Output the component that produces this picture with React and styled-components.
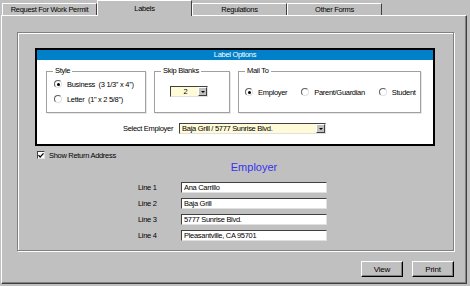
import styled, { createGlobalStyle } from "styled-components";

const GlobalStyle = createGlobalStyle`
  body {
    margin: 0;
    background: #c0c0c0;
    font-family: "Liberation Sans", Arial, sans-serif;
    font-size: 7.5px;
    letter-spacing: -0.3px;
    color: #000;
  }
`;

const tabs = ["Request For Work Permit", "Labels", "Regulations", "Other Forms"];
const lines = ["Ana Carrillo", "Baja Grill", "5777 Sunrise Blvd.", "Pleasantville, CA  95701"];

export default function App() {
  return (
    <Screen>
      <GlobalStyle />
      <TabBar>
        {tabs.map((t) => (
          <Tab key={t} $active={t === "Labels"}>
            {t}
          </Tab>
        ))}
      </TabBar>
      <Panel>
        <Frame>
          <OptionsBox>
            <TitleBar>Label Options</TitleBar>
            <GroupRow>
              <Group $width={100}>
                <Legend>Style</Legend>
                <RadioColumn>
                  <RadioItem>
                    <Radio $checked />
                    Business&nbsp;&nbsp;(3 1/3'' x 4'')
                  </RadioItem>
                  <RadioItem>
                    <Radio />
                    Letter&nbsp;&nbsp;(1'' x 2 5/8'')
                  </RadioItem>
                </RadioColumn>
              </Group>
              <Group $width={76}>
                <Legend>Skip Blanks</Legend>
                <SkipCombo>
                  <ComboValue $center>2</ComboValue>
                  <ComboArrow />
                </SkipCombo>
              </Group>
              <Group $width={183}>
                <Legend>Mail To</Legend>
                <RadioRow>
                  <RadioItem>
                    <Radio $checked />
                    Employer
                  </RadioItem>
                  <RadioItem>
                    <Radio />
                    Parent/Guardian
                  </RadioItem>
                  <RadioItem>
                    <Radio />
                    Student
                  </RadioItem>
                </RadioRow>
              </Group>
            </GroupRow>
            <EmployerRow>
              <span>Select Employer</span>
              <EmployerCombo>
                <ComboValue>Baja Grill / 5777 Sunrise Blvd.</ComboValue>
                <ComboArrow />
              </EmployerCombo>
            </EmployerRow>
          </OptionsBox>
          <CheckRow>
            <CheckBox>
              <svg width="7" height="7" viewBox="0 0 7 7">
                <polyline points="0.5,3 2.5,5.2 6.5,1" fill="none" stroke="#000" strokeWidth="1.5" />
              </svg>
            </CheckBox>
            Show Return Address
          </CheckRow>
          <LinesGrid>
            <Heading>Employer</Heading>
            {lines.map((v, i) => (
              <LineRow key={i}>
                <LineLabel>Line {i + 1}</LineLabel>
                <LineInput>{v}</LineInput>
              </LineRow>
            ))}
          </LinesGrid>
        </Frame>
        <ButtonRow>
          <Button>View</Button>
          <Button>Print</Button>
        </ButtonRow>
      </Panel>
    </Screen>
  );
}

const Screen = styled.div`
  width: 470px;
  height: 286px;
  background: #c0c0c0;
  display: flex;
  flex-direction: column;
  overflow: hidden;
`;

const TabBar = styled.div`
  height: 15px;
  display: flex;
  align-items: flex-end;
  padding-left: 2px;
  position: relative;
  z-index: 1;
`;

const Tab = styled.div`
  width: 95px;
  box-sizing: border-box;
  height: ${(p) => (p.$active ? "16px" : "12px")};
  margin-bottom: ${(p) => (p.$active ? "-1px" : "0")};
  background: #c0c0c0;
  border-top: 1px solid #fff;
  border-left: 1px solid #fff;
  border-right: 1px solid #404040;
  display: flex;
  justify-content: center;
  align-items: ${(p) => (p.$active ? "flex-start" : "center")};
  padding-top: ${(p) => (p.$active ? "3px" : "0")};
  line-height: 10px;
  white-space: nowrap;
`;

const Panel = styled.div`
  margin-left: 1px;
  width: 466px;
  height: 269px;
  box-sizing: border-box;
  border-top: 1px solid #fff;
  border-left: 1px solid #fff;
  border-right: 1px solid #404040;
  border-bottom: 1px solid #404040;
  box-shadow: inset -1px -1px 0 #808080;
  padding: 16px 0 0 15px;
  display: flex;
  flex-direction: column;
`;

const Frame = styled.div`
  width: 437px;
  height: 219px;
  box-sizing: border-box;
  border: 1px solid #808080;
  box-shadow: 1px 1px 0 #fff, inset 1px 1px 0 #fff;
  padding: 15px 0 0 17px;
  display: flex;
  flex-direction: column;
`;

const OptionsBox = styled.div`
  width: 400px;
  height: 98px;
  box-sizing: border-box;
  border: 2px solid #000;
  background: #fff;
  display: flex;
  flex-direction: column;
`;

const TitleBar = styled.div`
  height: 10px;
  line-height: 10px;
  background: #0080c8;
  color: #fff;
  text-align: center;
`;

const GroupRow = styled.div`
  display: flex;
  gap: 8px;
  margin: 6px 0 0 9px;
`;

const Group = styled.fieldset`
  width: ${(p) => p.$width}px;
  height: 47px;
  box-sizing: border-box;
  margin: 0;
  padding: 0;
  border: 1px solid #a0a0a0;
  box-shadow: 1px 1px 0 #e8e8e8;
  min-inline-size: 0;
`;

const Legend = styled.legend`
  margin-left: 6px;
  padding: 0 2px;
  line-height: 10px;
  height: 10px;
`;

const RadioColumn = styled.div`
  display: flex;
  flex-direction: column;
  gap: 5px;
  padding: 3px 0 0 7px;
`;

const RadioRow = styled.div`
  display: flex;
  gap: 14px;
  padding: 11px 0 0 6px;
`;

const RadioItem = styled.div`
  display: flex;
  align-items: center;
  gap: 5px;
  height: 10px;
  white-space: nowrap;
`;

const Radio = styled.span`
  width: 8px;
  height: 8px;
  box-sizing: border-box;
  border-radius: 50%;
  border: 1px solid;
  border-color: #606060 #e0e0e0 #e0e0e0 #606060;
  background: #fff;
  display: flex;
  align-items: center;
  justify-content: center;

  &::after {
    content: "";
    width: 3px;
    height: 3px;
    border-radius: 50%;
    background: ${(p) => (p.$checked ? "#000" : "transparent")};
  }
`;

const Combo = styled.div`
  height: 11px;
  box-sizing: border-box;
  display: flex;
  background: #fffbd8;
  border: 1px solid;
  border-color: #404040 #e0e0e0 #e0e0e0 #404040;
`;

const SkipCombo = styled(Combo)`
  width: 38px;
  margin: 10px 0 0 15px;
`;

const EmployerCombo = styled(Combo)`
  width: 147px;
`;

const ComboValue = styled.div`
  flex: 1;
  line-height: 9px;
  padding-left: 2px;
  text-align: ${(p) => (p.$center ? "center" : "left")};
  white-space: nowrap;
  overflow: hidden;
`;

const ComboArrow = styled.div`
  width: 9px;
  background: #c0c0c0;
  box-sizing: border-box;
  border: 1px solid;
  border-color: #fff #404040 #404040 #fff;
  display: flex;
  align-items: center;
  justify-content: center;

  &::after {
    content: "";
    border-left: 2px solid transparent;
    border-right: 2px solid transparent;
    border-top: 2px solid #000;
  }
`;

const EmployerRow = styled.div`
  display: flex;
  align-items: center;
  gap: 6px;
  margin: 10px 0 0 86px;
`;

const CheckRow = styled.div`
  display: flex;
  align-items: center;
  gap: 4px;
  margin: 5px 0 0 2px;
  height: 8px;
`;

const CheckBox = styled.span`
  width: 8px;
  height: 8px;
  box-sizing: border-box;
  background: #fff;
  border: 1px solid;
  border-color: #404040 #e0e0e0 #e0e0e0 #404040;
  display: flex;
  align-items: center;
  justify-content: center;
`;

const LinesGrid = styled.div`
  display: grid;
  grid-template-columns: 43px 146px;
  row-gap: 5px;
  margin: 2px 0 0 103px;
`;

const Heading = styled.div`
  grid-column: 2;
  text-align: center;
  font-size: 11px;
  letter-spacing: 0;
  line-height: 13px;
  color: #3434ee;
  margin-bottom: 3px;
`;

const LineRow = styled.div`
  display: contents;
`;

const LineLabel = styled.div`
  line-height: 11px;
`;

const LineInput = styled.div`
  height: 11px;
  box-sizing: border-box;
  background: #fff;
  border: 1px solid;
  border-color: #404040 #e0e0e0 #e0e0e0 #404040;
  padding-left: 2px;
  line-height: 9px;
  white-space: nowrap;
`;

const ButtonRow = styled.div`
  width: 437px;
  display: flex;
  justify-content: flex-end;
  gap: 9px;
  margin-top: 10px;
`;

const Button = styled.button`
  width: 42px;
  height: 16px;
  box-sizing: border-box;
  padding: 0;
  background: #c0c0c0;
  border: 1px solid;
  border-color: #fff #000 #000 #fff;
  box-shadow: inset -1px -1px 0 #808080;
  font-family: inherit;
  font-size: 8px;
  letter-spacing: -0.2px;
  color: #000;
`;
